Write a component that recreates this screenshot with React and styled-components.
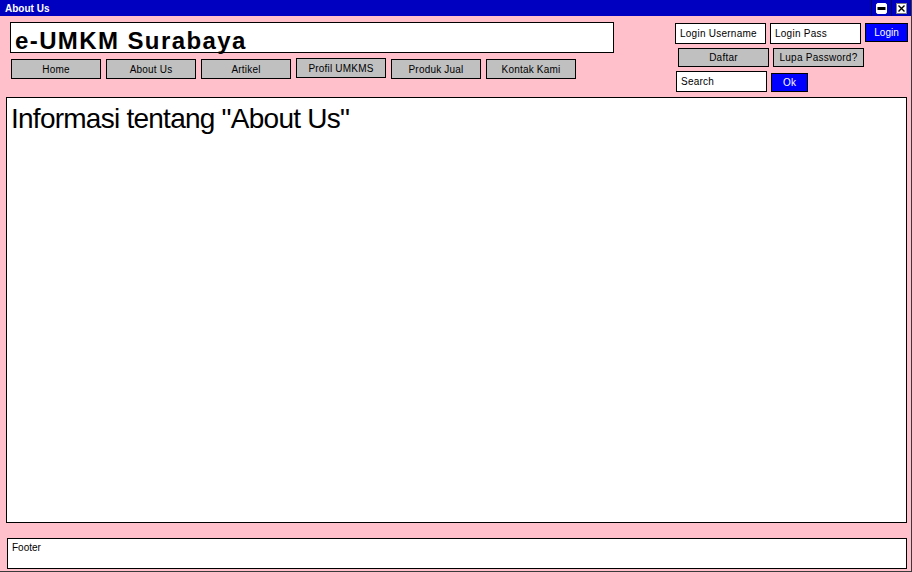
import React from 'react';
import styled, { createGlobalStyle } from 'styled-components';

const GlobalStyle = createGlobalStyle`
  html, body {
    margin: 0;
    padding: 0;
    background: #ffc0cb;
  }
  body {
    font-family: "Liberation Sans", Arial, sans-serif;
  }
`;

const Window = styled.div`
  box-sizing: border-box;
  width: 912px;
  height: 572px;
  display: flex;
  flex-direction: column;
  background: #ffc0cb;
  border-right: 1px solid #3a3a3a;
  border-bottom: 1px solid #3a3a3a;
`;

const TitleBar = styled.div`
  height: 16px;
  flex: none;
  display: flex;
  align-items: center;
  justify-content: space-between;
  background: #0000c0;
  padding-left: 5px;
`;

const TitleText = styled.span`
  color: #fff;
  font-size: 10px;
  font-weight: bold;
`;

const Controls = styled.div`
  display: flex;
  height: 100%;
`;

const ControlCell = styled.div`
  width: 19px;
  height: 100%;
  display: flex;
  align-items: center;
  justify-content: center;
  border-left: 1px solid #000060;
`;

const Header = styled.div`
  height: 81px;
  flex: none;
  display: flex;
`;

const Brand = styled.div`
  margin-left: 10px;
  padding-top: 6px;
  width: 604px;
`;

const BrandBox = styled.div`
  box-sizing: border-box;
  height: 31px;
  background: #fff;
  border: 1px solid #000;
  padding: 5px 0 0 4px;
  font-size: 24px;
  font-weight: bold;
  line-height: 26px;
  color: #000;
  letter-spacing: 1.4px;
`;

const Nav = styled.div`
  display: flex;
  gap: 5px;
  margin: 6px 0 0 1px;
  align-items: flex-start;
`;

const NavButton = styled.div`
  box-sizing: border-box;
  width: 90px;
  height: 20px;
  margin-top: ${p => (p.$lift ? -1 : 0)}px;
  background: #c0c0c0;
  border: 1px solid #000;
  display: flex;
  align-items: center;
  justify-content: center;
  font-size: 10px;
  letter-spacing: 0.2px;
  color: #000;
`;

const Account = styled.div`
  margin-left: 61px;
  padding-top: 7px;
  display: flex;
  flex-direction: column;
  gap: 4px;
`;

const Row = styled.div`
  display: flex;
  gap: 4px;
  align-items: ${p => p.$align || 'flex-start'};
  padding-left: ${p => p.$indent || 0}px;
`;

const Field = styled.div`
  box-sizing: border-box;
  width: 91px;
  height: 21px;
  background: #fff;
  border: 1px solid #000;
  padding-left: 4px;
  display: flex;
  align-items: center;
  font-size: 10px;
  letter-spacing: 0.25px;
  color: #000;
`;

const GrayButton = styled.div`
  box-sizing: border-box;
  width: 91px;
  height: 19px;
  background: #c0c0c0;
  border: 1px solid #000;
  display: flex;
  align-items: center;
  justify-content: center;
  font-size: 10px;
  letter-spacing: 0.25px;
  color: #000;
`;

const BlueButton = styled.div`
  box-sizing: border-box;
  width: ${p => p.$w}px;
  height: 19px;
  background: #0000ff;
  border: 1px solid #000;
  display: flex;
  align-items: center;
  justify-content: center;
  font-size: 10px;
  color: #fff;
`;

const Content = styled.div`
  box-sizing: border-box;
  margin-left: 6px;
  width: 901px;
  height: 426px;
  background: #fff;
  border: 1px solid #000;
  padding: 7px 0 0 4px;
`;

const Heading = styled.h1`
  margin: 0;
  font-weight: normal;
  font-size: 28px;
  line-height: 28px;
  letter-spacing: -0.75px;
  color: #000;
`;

const Footer = styled.div`
  box-sizing: border-box;
  margin: 15px 0 0 7px;
  width: 900px;
  height: 31px;
  background: #fff;
  border: 1px solid #000;
  padding: 3px 0 0 4px;
  font-size: 10px;
  line-height: 12px;
  color: #000;
`;

const navItems = ['Home', 'About Us', 'Artikel', 'Profil UMKMS', 'Produk Jual', 'Kontak Kami'];

function RestoreIcon() {
  return (
    <svg width="11" height="11" viewBox="0 0 11 11">
      <rect x="0.5" y="0.5" width="10" height="10" rx="1.5" fill="#fff" stroke="#fff" />
      <rect x="1.5" y="4" width="8" height="3" fill="#000" />
    </svg>
  );
}

function CloseIcon() {
  return (
    <svg width="11" height="11" viewBox="0 0 11 11">
      <rect x="0.5" y="0.5" width="10" height="10" fill="#fff" stroke="#808080" />
      <path d="M2.5 2.5 L8.5 8.5 M8.5 2.5 L2.5 8.5" stroke="#000" strokeWidth="1.4" />
    </svg>
  );
}

export default function App() {
  return (
    <>
      <GlobalStyle />
      <Window>
        <TitleBar>
          <TitleText>About Us</TitleText>
          <Controls>
            <ControlCell><RestoreIcon /></ControlCell>
            <ControlCell><CloseIcon /></ControlCell>
          </Controls>
        </TitleBar>
        <Header>
          <Brand>
            <BrandBox>e-UMKM Surabaya</BrandBox>
            <Nav>
              {navItems.map(item => (
                <NavButton key={item} $lift={item === 'Profil UMKMS'}>{item}</NavButton>
              ))}
            </Nav>
          </Brand>
          <Account>
            <Row>
              <Field>Login Username</Field>
              <Field>Login Pass</Field>
              <BlueButton $w={43}>Login</BlueButton>
            </Row>
            <Row $indent={3}>
              <GrayButton>Daftar</GrayButton>
              <GrayButton>Lupa Password?</GrayButton>
            </Row>
            <Row $indent={1} $align="flex-end">
              <Field>Search</Field>
              <BlueButton $w={37}>Ok</BlueButton>
            </Row>
          </Account>
        </Header>
        <Content>
          <Heading>Informasi tentang "About Us"</Heading>
        </Content>
        <Footer>Footer</Footer>
      </Window>
    </>
  );
}
